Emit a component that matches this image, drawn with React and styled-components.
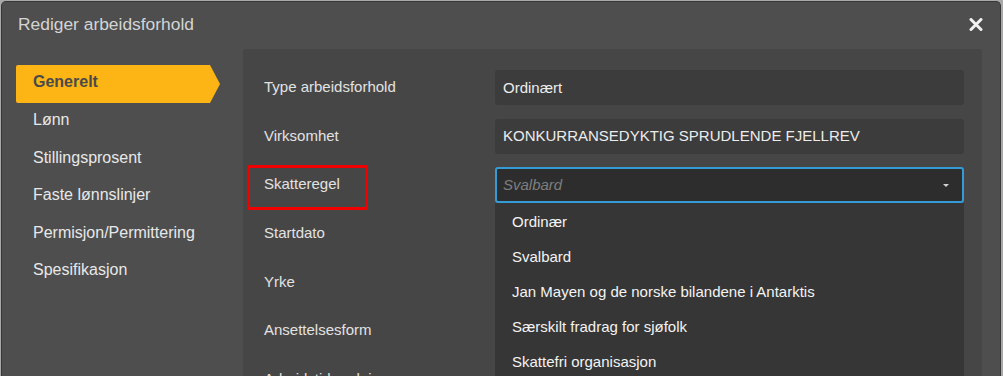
import React from "react";
import styled, { createGlobalStyle, css } from "styled-components";

const GlobalStyle = createGlobalStyle`
  html, body { margin: 0; padding: 0; }
  body {
    background: #a9a9a9;
    font-family: "Liberation Sans", Arial, sans-serif;
    overflow: hidden;
  }
  * { box-sizing: border-box; }
`;

const Modal = styled.div`
  margin: 1px 0 0 1px;
  width: 1000px;
  height: 375px;
  background: #4e4e4e;
  border: 1px solid #383838;
  border-bottom: none;
  border-radius: 5px 5px 0 0;
  display: flex;
  flex-direction: column;
  overflow: hidden;
`;

const Header = styled.div`
  height: 47px;
  flex: none;
  display: flex;
  align-items: center;
  justify-content: space-between;
  padding: 0 17px 0 16px;
`;

const Title = styled.h1`
  margin: 0;
  font-size: 17.4px;
  font-weight: normal;
  color: #d4d4d4;
  padding-bottom: 2px;
`;

const CloseButton = styled.button`
  border: none;
  background: none;
  padding: 0;
  width: 14px;
  height: 13px;
  display: flex;
  cursor: pointer;
  margin-bottom: 3px;
`;

const Body = styled.div`
  flex: 1;
  display: flex;
  min-height: 0;
`;

const Sidebar = styled.nav`
  width: 241px;
  flex: none;
  padding: 16px 0 0 14px;
  display: flex;
  flex-direction: column;
`;

const NavItem = styled.div`
  height: 37.5px;
  display: flex;
  align-items: center;
  padding: 0 0 3.5px 17px;
  font-size: 16px;
  color: #e8e8e8;
  ${(p) =>
    p.$active &&
    css`
      width: 204px;
      height: 38px;
      background: #fdb515;
      color: #4a4a4a;
      font-weight: bold;
      border-radius: 2px 0 0 2px;
      clip-path: polygon(0 0, calc(100% - 10px) 0, 100% 50%, calc(100% - 10px) 100%, 0 100%);
    `}
`;

const Panel = styled.section`
  flex: 1;
  margin-right: 18px;
  background: #464646;
  border-radius: 3px 3px 0 0;
  padding: 21px 18px 0 21px;
`;

const Form = styled.div`
  display: grid;
  grid-template-columns: 231px 1fr;
  grid-auto-rows: 35px;
  row-gap: 13.7px;
`;

const Label = styled.label`
  position: relative;
  display: flex;
  align-items: center;
  padding-bottom: 2px;
  font-size: 15px;
  color: #e2e2e2;
  ${(p) =>
    p.$marked &&
    css`
      &::after {
        content: "";
        position: absolute;
        left: -17px;
        top: -2.4px;
        width: 115px;
        height: 39px;
        border: 3px solid #f00000;
        border-radius: 2px;
      }
    `}
`;

const Input = styled.div`
  height: 35px;
  background: #3c3c3c;
  border-radius: 3px;
  display: flex;
  align-items: center;
  padding: 0 8px 1px;
  font-size: 15px;
  color: #ececec;
`;

const SelectWrap = styled.div`
  position: relative;
  z-index: 2;
`;

const SelectBox = styled.div`
  height: 36px;
  background: #2d2d2d;
  border: 2px solid #359bd6;
  border-radius: 3px;
  display: flex;
  align-items: center;
  justify-content: space-between;
  padding: 0 13px 1px 6px;
`;

const Placeholder = styled.span`
  font-size: 15px;
  font-style: italic;
  color: #7e7e7e;
`;

const Caret = styled.span`
  width: 0;
  height: 0;
  border-left: 3px solid transparent;
  border-right: 3px solid transparent;
  border-top: 3px solid #d2d2d2;
  margin-top: 1px;
`;

const Menu = styled.ul`
  position: absolute;
  left: 0;
  right: 0;
  top: 36px;
  margin: 0;
  padding: 1.5px 0 0;
  list-style: none;
  background: #363636;
  height: 200px;
`;

const MenuItem = styled.li`
  height: 35px;
  display: flex;
  align-items: center;
  padding: 0 0 1px 17px;
  font-size: 15px;
  color: #f3f3f3;
`;

const navItems = [
  "Generelt",
  "Lønn",
  "Stillingsprosent",
  "Faste lønnslinjer",
  "Permisjon/Permittering",
  "Spesifikasjon",
];

const options = [
  "Ordinær",
  "Svalbard",
  "Jan Mayen og de norske bilandene i Antarktis",
  "Særskilt fradrag for sjøfolk",
  "Skattefri organisasjon",
];

export default function App() {
  return (
    <>
      <GlobalStyle />
      <Modal>
        <Header>
          <Title>Rediger arbeidsforhold</Title>
          <CloseButton aria-label="Lukk">
            <svg width="14" height="13" viewBox="0 0 14 13">
              <path
                d="M2 1.5 L12 11.5 M12 1.5 L2 11.5"
                stroke="#f2f2f2"
                strokeWidth="3"
                strokeLinecap="round"
              />
            </svg>
          </CloseButton>
        </Header>
        <Body>
          <Sidebar>
            {navItems.map((n, i) => (
              <NavItem key={n} $active={i === 0}>
                {n}
              </NavItem>
            ))}
          </Sidebar>
          <Panel>
            <Form>
              <Label>Type arbeidsforhold</Label>
              <Input>Ordinært</Input>
              <Label>Virksomhet</Label>
              <Input>KONKURRANSEDYKTIG SPRUDLENDE FJELLREV</Input>
              <Label $marked>Skatteregel</Label>
              <SelectWrap>
                <SelectBox>
                  <Placeholder>Svalbard</Placeholder>
                  <Caret />
                </SelectBox>
                <Menu>
                  {options.map((o) => (
                    <MenuItem key={o}>{o}</MenuItem>
                  ))}
                </Menu>
              </SelectWrap>
              <Label>Startdato</Label>
              <Input />
              <Label>Yrke</Label>
              <Input />
              <Label>Ansettelsesform</Label>
              <Input />
              <Label>Arbeidstidsordning</Label>
              <Input />
            </Form>
          </Panel>
        </Body>
      </Modal>
    </>
  );
}
